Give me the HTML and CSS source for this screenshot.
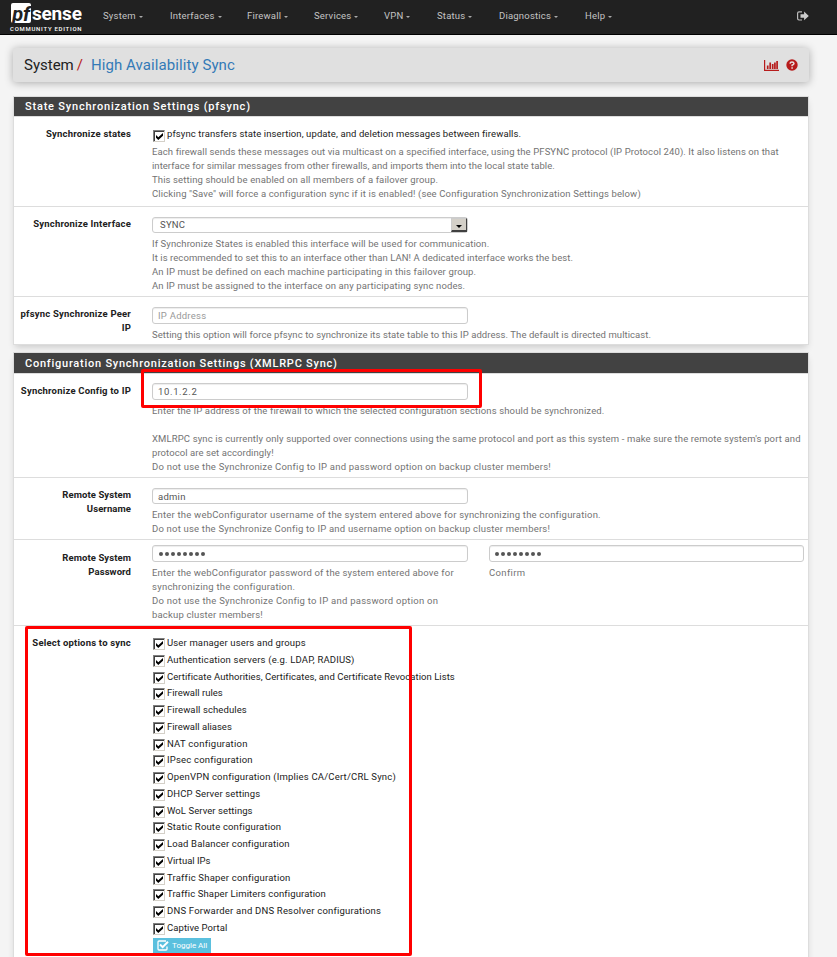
FILE: index.html
```html
<!DOCTYPE html>
<html lang="en">
<head>
<meta charset="utf-8">
<title>System: High Availability Sync</title>
<link rel="stylesheet" href="styles.css">
</head>
<body>
<nav class="navbar">
  <div class="brand">
    <div class="brand-name"><span class="pf">pf</span><span class="sense">sense</span></div>
    <div class="edition">COMMUNITY EDITION</div>
  </div>
  <div class="menu">
    <a>System</a><a>Interfaces</a><a>Firewall</a><a>Services</a><a>VPN</a><a>Status</a><a>Diagnostics</a><a>Help</a>
  </div>
  <svg class="logout" viewBox="0 0 12 10"><path d="M5 .8H2Q.6.8.6 2.2v5.400Q.6 9 2 9h3" fill="none" stroke="#bbb" stroke-width="1.2"/><path d="M3.500 3.200h3.600V.6L11.800 5 7.100 9.300V6.700H3.500z" fill="#ccc"/></svg>
</nav>
<header class="crumbs">
  <span class="c1">System</span><span class="slash">/</span><span class="c2">High Availability Sync</span>
  <svg class="chart" viewBox="0 0 15 11"><path d="M.6 0v10.400H15" fill="none" stroke="#b71c1c" stroke-width="1.200"/><path d="M3.700 9V5.500M6.200 9V2.500M8.700 9V4M10.900 9V2.500M13.100 9V1" fill="none" stroke="#b71c1c" stroke-width="1.700"/></svg>
  <svg class="help-icon" viewBox="0 0 12 12"><circle cx="6" cy="6" r="5.700" fill="#b71c1c"/><path d="M4 4.700Q4.200 3 6 3t2 1.500Q8 5.500 6.100 6.200V7.200M6.100 8.200v1.500" fill="none" stroke="#e8e0e0" stroke-width="1.500"/></svg>
</header>

<section class="panel">
  <h2 class="h-a">State Synchronization Settings (pfsync)</h2>
  <div class="row r1">
    <label>Synchronize states</label>
    <div class="field">
      <div class="check top-check"><i class="box"><svg viewBox="0 0 7 7"><path d="M0 2v2.700L2.300 7 7 2.700V0L2.300 4.300z"/></svg></i><span class="t10">pfsync transfers state insertion, update, and deletion messages between firewalls.</span></div>
      <p><span class="t10">Each firewall sends these messages out via multicast on a specified interface, using the PFSYNC protocol (IP Protocol 240). It also listens on that</span><span class="t4">interface for similar messages from other firewalls, and imports them into the local state table.</span><span class="t12">This setting should be enabled on all members of a failover group.</span><span class="t14">Clicking "Save" will force a configuration sync if it is enabled! (see Configuration Synchronization Settings below)</span></p>
    </div>
  </div>
  <div class="row r2">
    <label>Synchronize Interface</label>
    <div class="field">
      <div class="input select"><span>SYNC</span><b></b></div>
      <p><span class="t10">If Synchronize States is enabled this interface will be used for communication.</span><span class="t7">It is recommended to set this to an interface other than LAN! A dedicated interface works the best.</span><span class="t14">An IP must be defined on each machine participating in this failover group.</span><span class="t12">An IP must be assigned to the interface on any participating sync nodes.</span></p>
    </div>
  </div>
  <div class="row r3">
    <label>pfsync Synchronize Peer<br>IP</label>
    <div class="field">
      <div class="input placeholder">IP Address</div>
      <p><span class="t7">Setting this option will force pfsync to synchronize its state table to this IP address. The default is directed multicast.</span></p>
    </div>
  </div>
</section>

<section class="panel second">
  <h2 class="h-b">Configuration Synchronization Settings (XMLRPC Sync)</h2>
  <div class="row r4">
    <label>Synchronize Config to IP</label>
    <div class="field">
      <div class="input ip">10.1.2.2</div>
      <p><span class="t14">Enter the IP address of the firewall to which the selected configuration sections should be synchronized.</span><br><span class="t13">XMLRPC sync is currently only supported over connections using the same protocol and port as this system - make sure the remote system's port and</span><span class="t7">protocol are set accordingly!</span><span class="t22">Do not use the Synchronize Config to IP and password option on backup cluster members!</span></p>
      <div class="mark mark-ip"></div>
    </div>
  </div>
  <div class="row r5">
    <label>Remote System<br>Username</label>
    <div class="field">
      <div class="input">admin</div>
      <p><span class="t20">Enter the webConfigurator username of the system entered above for synchronizing the configuration.</span><span class="t20">Do not use the Synchronize Config to IP and username option on backup cluster members!</span></p>
    </div>
  </div>
  <div class="row r6">
    <label>Remote System<br>Password</label>
    <div class="field">
      <div class="input dots"><i></i><i></i><i></i><i></i><i></i><i></i><i></i><i></i></div>
      <p><span class="t17">Enter the webConfigurator password of the system entered above for</span><span class="t25">synchronizing the configuration.</span><span class="t25">Do not use the Synchronize Config to IP and password option on</span><span class="t17">backup cluster members!</span></p>
    </div>
    <div class="field">
      <div class="input dots confirm"><i></i><i></i><i></i><i></i><i></i><i></i><i></i><i></i></div>
      <p><span class="t45">Confirm</span></p>
    </div>
  </div>
  <div class="row r7">
    <label>Select options to sync</label>
    <div class="field options">
      <div class="check"><i class="box"><svg viewBox="0 0 7 7"><path d="M0 2v2.700L2.300 7 7 2.700V0L2.300 4.300z"/></svg></i><span class="t14">User manager users and groups</span></div>
      <div class="check"><i class="box"><svg viewBox="0 0 7 7"><path d="M0 2v2.700L2.300 7 7 2.700V0L2.300 4.300z"/></svg></i><span class="t17">Authentication servers (e.g. LDAP, RADIUS)</span></div>
      <div class="check"><i class="box"><svg viewBox="0 0 7 7"><path d="M0 2v2.700L2.300 7 7 2.700V0L2.300 4.300z"/></svg></i><span class="t5">Certificate Authorities, Certificates, and Certificate Revocation Lists</span></div>
      <div class="check"><i class="box"><svg viewBox="0 0 7 7"><path d="M0 2v2.700L2.300 7 7 2.700V0L2.300 4.300z"/></svg></i><span>Firewall rules</span></div>
      <div class="check"><i class="box"><svg viewBox="0 0 7 7"><path d="M0 2v2.700L2.300 7 7 2.700V0L2.300 4.300z"/></svg></i><span class="t10">Firewall schedules</span></div>
      <div class="check"><i class="box"><svg viewBox="0 0 7 7"><path d="M0 2v2.700L2.300 7 7 2.700V0L2.300 4.300z"/></svg></i><span>Firewall aliases</span></div>
      <div class="check"><i class="box"><svg viewBox="0 0 7 7"><path d="M0 2v2.700L2.300 7 7 2.700V0L2.300 4.300z"/></svg></i><span class="t25">NAT configuration</span></div>
      <div class="check"><i class="box"><svg viewBox="0 0 7 7"><path d="M0 2v2.700L2.300 7 7 2.700V0L2.300 4.300z"/></svg></i><span class="t20">IPsec configuration</span></div>
      <div class="check"><i class="box"><svg viewBox="0 0 7 7"><path d="M0 2v2.700L2.300 7 7 2.700V0L2.300 4.300z"/></svg></i><span class="t20">OpenVPN configuration (Implies CA/Cert/CRL Sync)</span></div>
      <div class="check"><i class="box"><svg viewBox="0 0 7 7"><path d="M0 2v2.700L2.300 7 7 2.700V0L2.300 4.300z"/></svg></i><span class="t13">DHCP Server settings</span></div>
      <div class="check"><i class="box"><svg viewBox="0 0 7 7"><path d="M0 2v2.700L2.300 7 7 2.700V0L2.300 4.300z"/></svg></i><span class="t7">WoL Server settings</span></div>
      <div class="check"><i class="box"><svg viewBox="0 0 7 7"><path d="M0 2v2.700L2.300 7 7 2.700V0L2.300 4.300z"/></svg></i><span class="t17">Static Route configuration</span></div>
      <div class="check"><i class="box"><svg viewBox="0 0 7 7"><path d="M0 2v2.700L2.300 7 7 2.700V0L2.300 4.300z"/></svg></i><span class="t14">Load Balancer configuration</span></div>
      <div class="check"><i class="box"><svg viewBox="0 0 7 7"><path d="M0 2v2.700L2.300 7 7 2.700V0L2.300 4.300z"/></svg></i><span>Virtual IPs</span></div>
      <div class="check"><i class="box"><svg viewBox="0 0 7 7"><path d="M0 2v2.700L2.300 7 7 2.700V0L2.300 4.300z"/></svg></i><span class="t20">Traffic Shaper configuration</span></div>
      <div class="check"><i class="box"><svg viewBox="0 0 7 7"><path d="M0 2v2.700L2.300 7 7 2.700V0L2.300 4.300z"/></svg></i><span class="t12">Traffic Shaper Limiters configuration</span></div>
      <div class="check"><i class="box"><svg viewBox="0 0 7 7"><path d="M0 2v2.700L2.300 7 7 2.700V0L2.300 4.300z"/></svg></i><span class="t20">DNS Forwarder and DNS Resolver configurations</span></div>
      <div class="check"><i class="box"><svg viewBox="0 0 7 7"><path d="M0 2v2.700L2.300 7 7 2.700V0L2.300 4.300z"/></svg></i><span class="t7">Captive Portal</span></div>
      <div class="toggle"><svg viewBox="0 0 12 11"><path d="M9 1H2Q1 1 1 2v7q0 1 1 1h7q1 0 1-1V6.500" fill="none" stroke="#fff" stroke-width="1.300"/><path d="M3 4.500l2.600 2.600 5.400-5.400" fill="none" stroke="#fff" stroke-width="2"/></svg><span>Toggle All</span></div>
    </div>
    <div class="mark mark-options"></div>
  </div>
</section>
</body>
</html>
```

FILE: styles.css
```css
* { box-sizing: border-box; }
body { margin: 0; height: 957px; overflow: hidden; background: #f4f4f4; font: 9.5px/14px Roboto, "Liberation Sans", sans-serif; color: #212121; }
svg { display: block; flex: none; }
.navbar { height: 35px; background: #212121; border-bottom: 1px solid #000; display: flex; }
.brand { width: 103px; padding: 3px 0 0 10px; color: #fff; }
.brand-name { display: flex; height: 21px; align-items: flex-start; }
.pf { width: 20px; height: 20px; margin-left: 1px; background: #fff; color: #212121; border-radius: 2px; font: italic 700 20px/22px Roboto, sans-serif; letter-spacing: -.3px; text-align: center; }
.sense { margin-left: 1px; font: 700 19px/21px Roboto, sans-serif; letter-spacing: -.2px; }
.edition { margin-top: 1px; font: 500 6px/7px Roboto, sans-serif; letter-spacing: .73px; white-space: nowrap; }
.menu { display: grid; grid-template-columns: 67px 77px 67px 70px 53px 62px 86px 40px; color: #c4c4c4; padding-top: 9px; letter-spacing: .2px; }
.menu a { display: flex; align-items: center; height: 14px; white-space: nowrap; }
.menu a::after { content: ""; margin: 2px 0 0 3px; border: 2px solid transparent; border-top-color: #aaa; border-bottom: 0; }
.logout { width: 12px; height: 10px; margin: 11px 0 0 172px; }
.crumbs { height: 34px; margin: 13px 28px 0 13px; padding: 0 11px; display: flex; align-items: center; background: #e0e0e0; border-radius: 3px; box-shadow: 0 1px 8px rgba(0,0,0,.3); font-size: 15px; line-height: 20px; }
.slash { color: #b71c1c; margin: 0 8px 0 3px; }
.c2 { color: #337ab7; letter-spacing: .08px; }
.chart { width: 15px; height: 11px; margin-left: auto; }
.help-icon { width: 12px; height: 12px; margin: 0 0 0 7px; }
.panel { margin: 14px 28px 0 13px; border: 1px solid #ddd; background: #fff; box-shadow: 0 4px 7px -2px rgba(0,0,0,.18); }
.second { margin-top: 7px; height: 640px; }
h2 { margin: 0; height: 19px; padding-left: 11px; background: #424242; color: #fff; font-size: 11px; font-weight: 500; line-height: 19px; letter-spacing: .8px; white-space: nowrap; }
.second h2 { height: 20px; line-height: 21px; letter-spacing: .76px; }
.row { position: relative; display: grid; grid-template-columns: 117px 316px 315px; column-gap: 21px; border-top: 1px solid #ddd; }
.row label { text-align: right; font-weight: 700; padding-top: 10px; white-space: nowrap; letter-spacing: .2px; }
.r1, .r2 { height: 90px; } .r3 { height: 48px; } .r4 { height: 104px; } .r5 { height: 62px; } .r6 { height: 86px; }
.field { position: relative; padding-top: 10px; white-space: nowrap; }
p { margin: 0; color: #737373; }
p span { display: block; width: max-content; }
.t4 { letter-spacing: .04px; } .t5 { letter-spacing: .055px; } .t7 { letter-spacing: .07px; }
.t10 { letter-spacing: .1px; } .t12 { letter-spacing: .12px; } .t13 { letter-spacing: .13px; }
.t14 { letter-spacing: .14px; } .t17 { letter-spacing: .17px; } .t20 { letter-spacing: .2px; }
.t22 { letter-spacing: .22px; } .t25 { letter-spacing: .25px; } .t45 { letter-spacing: .35px; }
.input { height: 17px; border: 1px solid #ccc; border-radius: 3px; box-shadow: inset 0 1px 1px rgba(0,0,0,.075); padding: 0 5px; line-height: 16px; color: #555; margin-bottom: 4px; background: #fff; letter-spacing: .25px; }
.ip { letter-spacing: .65px; }
.placeholder { color: #999; }
.select, .r5 .input { height: 16px; }
.select { display: flex; padding: 0 0 0 7px; justify-content: space-between; line-height: 14px; }
.select b { width: 16px; height: 14px; background: #d4d0c8; border: 1px solid #ccc; border-right: 1.500px solid #404040; border-bottom: 2px solid #404040; display: flex; align-items: center; justify-content: center; }
.select b::after { content: ""; border: 3px solid transparent; border-top-color: #000; border-bottom: 0; margin-top: 3px; }
.r4 .field { padding-top: 9px; }
.r6 .field { padding-top: 5px; }
.r6 label { padding-top: 11px; }
.r5 label, .r6 label { letter-spacing: .08px; }
.dots { display: flex; align-items: center; gap: 2px; padding-left: 6px; }
.confirm { padding-left: 5px; }
.dots i { width: 4px; height: 4px; border-radius: 50%; background: #555; }
.check { display: flex; height: 16.760px; margin-left: 1px; line-height: 14px; }
.box { width: 12px; height: 12px; margin: 2px 2px 0 0; border: 1px solid; border-color: #808080 #d4d0c8 #d4d0c8 #808080; box-shadow: inset 1px 1px #404040; padding: 2px 1px 1px 2px; flex: none; }
.box svg { width: 7px; height: 7px; }
.box path { fill: #000; }
.top-check { height: 18px; }
.top-check .box { margin-top: 3px; }
.toggle { display: flex; align-items: center; width: 58px; height: 16px; margin-left: 1px; background: #5bc0de; color: #fff; font-size: 8px; padding-left: 4px; gap: 3px; }
.toggle svg { width: 12px; height: 11px; }
.mark { position: absolute; border: 3px solid #f00; border-radius: 2px; z-index: 2; }
.mark-ip { left: -11px; top: -5px; width: 341px; height: 39px; }
.mark-options { left: 11px; top: 0; width: 387px; height: 330px; }
```
